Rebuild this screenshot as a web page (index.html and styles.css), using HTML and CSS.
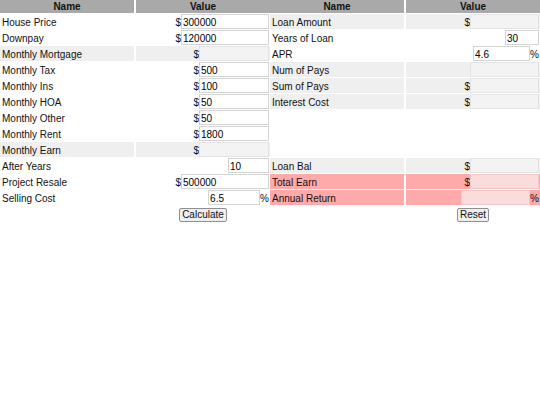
FILE: index.html
```html
<!DOCTYPE html>
<html>
<head>
<meta charset="utf-8">
<link rel="stylesheet" href="styles.css">
</head>
<body>
<div class="page">
  <div class="panel">
    <div class="row head"><div class="cell">Name</div><div class="cell">Value</div></div>
    <div class="row"><div class="cell name">House Price</div><div class="cell val"><span>$</span><input class="w88" value="300000"></div></div>
    <div class="row"><div class="cell name">Downpay</div><div class="cell val"><span>$</span><input class="w88" value="120000"></div></div>
    <div class="row gray"><div class="cell name">Monthly Mortgage</div><div class="cell val"><span>$</span><input class="w70 ro" readonly></div></div>
    <div class="row"><div class="cell name">Monthly Tax</div><div class="cell val"><span>$</span><input class="w70" value="500"></div></div>
    <div class="row"><div class="cell name">Monthly Ins</div><div class="cell val"><span>$</span><input class="w70" value="100"></div></div>
    <div class="row"><div class="cell name">Monthly HOA</div><div class="cell val"><span>$</span><input class="w70" value="50"></div></div>
    <div class="row"><div class="cell name">Monthly Other</div><div class="cell val"><span>$</span><input class="w70" value="50"></div></div>
    <div class="row"><div class="cell name">Monthly Rent</div><div class="cell val"><span>$</span><input class="w70" value="1800"></div></div>
    <div class="row gray"><div class="cell name">Monthly Earn</div><div class="cell val"><span>$</span><input class="w70 ro" readonly></div></div>
    <div class="row"><div class="cell name">After Years</div><div class="cell val"><input class="w41" value="10"></div></div>
    <div class="row"><div class="cell name">Project Resale</div><div class="cell val"><span>$</span><input class="w88" value="500000"></div></div>
    <div class="row"><div class="cell name">Selling Cost</div><div class="cell val"><input class="w52" value="6.5"><span>%</span></div></div>
    <div class="row btnrow"><div class="cell"></div><div class="cell center"><button>Calculate</button></div></div>
  </div>
  <div class="panel">
    <div class="row head"><div class="cell">Name</div><div class="cell">Value</div></div>
    <div class="row gray"><div class="cell name">Loan Amount</div><div class="cell val"><span>$</span><input class="w69 ro" readonly></div></div>
    <div class="row"><div class="cell name">Years of Loan</div><div class="cell val"><input class="w34" value="30"></div></div>
    <div class="row"><div class="cell name">APR</div><div class="cell val"><input class="w57" value="4.6"><span>%</span></div></div>
    <div class="row gray"><div class="cell name">Num of Pays</div><div class="cell val"><input class="w69 ro" readonly></div></div>
    <div class="row gray"><div class="cell name">Sum of Pays</div><div class="cell val"><span>$</span><input class="w69 ro" readonly></div></div>
    <div class="row gray"><div class="cell name">Interest Cost</div><div class="cell val"><span>$</span><input class="w69 ro" readonly></div></div>
    <div class="row empty"></div>
    <div class="row empty"></div>
    <div class="row empty"></div>
    <div class="row gray"><div class="cell name">Loan Bal</div><div class="cell val"><span>$</span><input class="w69 ro" readonly></div></div>
    <div class="row red"><div class="cell name">Total Earn</div><div class="cell val"><span>$</span><input class="w69 ro" readonly></div></div>
    <div class="row red"><div class="cell name">Annual Return</div><div class="cell val"><input class="w69 ro" readonly><span>%</span></div></div>
    <div class="row btnrow"><div class="cell"></div><div class="cell center"><button>Reset</button></div></div>
  </div>
</div>
</body>
</html>
```

FILE: styles.css
```css
* { box-sizing: border-box; }
html, body { margin: 0; padding: 0; background: #fff; }
body {
  font-family: "Liberation Sans", Arial, sans-serif;
  font-size: 10px;
  color: #111;
}
.page {
  width: 540px;
  display: grid;
  grid-template-columns: 270px 270px;
}
.panel {
  display: flex;
  flex-direction: column;
  gap: 1px;
}
.row {
  display: grid;
  grid-template-columns: 134px 134px;
  column-gap: 2px;
  height: 15px;
}
.row.head { height: 13px; }
.head .cell {
  background: #a9a9a9;
  font-weight: bold;
  text-align: center;
  line-height: 14px;
}
.cell { line-height: 15px; white-space: nowrap; overflow: hidden; }
.name { padding-left: 2px; padding-top: 1px; }
.val {
  display: flex;
  justify-content: flex-end;
  align-items: center;
  padding-right: 1px;
}
.val span { padding-top: 1px; }
.gray .cell { background: #efefef; }
.red .cell { background: #ffaaaa; }
input {
  height: 15px;
  font-family: "Liberation Sans", Arial, sans-serif;
  font-size: 10px;
  color: #000;
  padding: 1px 1px 0;
  margin: 0;
  border: 1px solid #d4d4d4;
  background: #fff;
  outline: none;
}
input.ro { background: #f3f3f3; border-color: #e3e3e3; }
.red input.ro { background: #fadcdc; border-color: #f4c8c8; }
.w88 { width: 88px; }
.w70 { width: 70px; }
.w69 { width: 69px; }
.w57 { width: 57px; }
.w52 { width: 52px; }
.w41 { width: 41px; }
.w34 { width: 34px; }
.btnrow { height: 16px; }
.btnrow .cell { overflow: visible; }
.center {
  display: flex;
  justify-content: center;
  align-items: flex-end;
}
button {
  font-family: "Liberation Sans", Arial, sans-serif;
  font-size: 10px;
  color: #111;
  height: 14px;
  line-height: 12px;
  padding: 0 2px;
  margin: 0;
  border: 1px solid #8f8f8f;
  border-radius: 2px;
  background: #efefef;
}
```
